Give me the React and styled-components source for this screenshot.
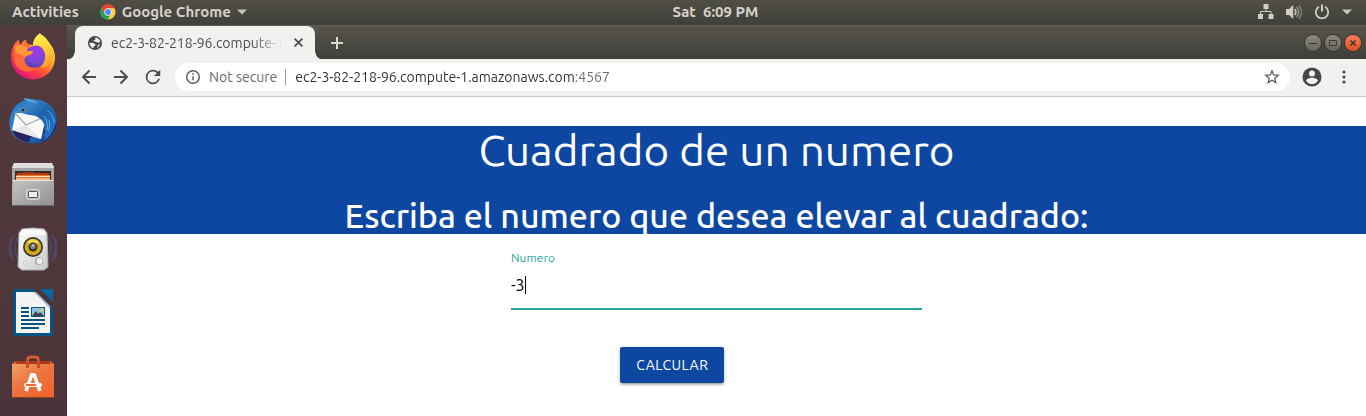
import React, { useState } from "react";
import styled, { createGlobalStyle } from "styled-components";

const GlobalStyle = createGlobalStyle`
  *, *::before, *::after { box-sizing: border-box; }
  html, body, #root { height: 100%; }
  body {
    margin: 0;
    background: #fff;
    font-family: Ubuntu, "Noto Sans", "Open Sans", sans-serif;
  }
  button, input { font: inherit; }
  svg { display: block; flex: none; }
`;

const Desktop = styled.div`
  display: flex;
  flex-direction: column;
  min-height: 100vh;
`;

const TopBar = styled.header`
  display: grid;
  grid-template-columns: 1fr auto 1fr;
  align-items: center;
  height: 25px;
  padding: 0 14px 0 12px;
  background: linear-gradient(#504e47, #403f39);
  color: #d6d2ca;
  font-size: 15px;
  font-weight: 600;
`;

const BarGroup = styled.div`
  display: flex;
  align-items: center;
  justify-content: ${(p) => (p.$end ? "flex-end" : "flex-start")};
  gap: ${(p) => (p.$end ? 12 : 21)}px;
`;

const BarButton = styled.button`
  display: flex;
  align-items: center;
  gap: 6px;
  padding: 0 0 2px;
  border: 0;
  background: none;
  color: inherit;
  line-height: 20px;
  white-space: pre;
`;

const Clock = styled(BarButton)`
  margin-left: 67px;
`;

const Workspace = styled.div`
  display: flex;
  flex: 1;
`;

const Launcher = styled.nav`
  display: flex;
  flex-direction: column;
  align-items: center;
  gap: 16px;
  width: 67px;
  padding: 7px 1px 0 0;
  background: linear-gradient(#523a3d, #4b3439);
`;

const LauncherButton = styled.button`
  display: block;
  width: 48px;
  height: 48px;
  padding: 0;
  border: 0;
  background: none;
`;

const BrowserWindow = styled.div`
  display: flex;
  flex: 1;
  flex-direction: column;
  min-width: 0;
`;

const TabStrip = styled.div`
  display: flex;
  align-items: center;
  height: 34px;
  padding: 0 5px 0 8px;
  border-top: 1px solid #5f5d55;
  background: linear-gradient(#57554d, #3f3e39);
`;

const Tab = styled.div`
  position: relative;
  display: flex;
  align-items: center;
  gap: 9px;
  width: 240px;
  height: 34px;
  padding: 0 10px 0 13px;
  border-radius: 8px 8px 0 0;
  background: #f2f1f0;
  color: #4c4c4c;
  font-size: 14px;

  &::before, &::after {
    content: "";
    position: absolute;
    bottom: 0;
    width: 8px;
    height: 8px;
  }
  &::before {
    right: 100%;
    background: radial-gradient(circle at 0 0, transparent 7px, #f2f1f0 8px);
  }
  &::after {
    left: 100%;
    background: radial-gradient(circle at 100% 0, transparent 7px, #f2f1f0 8px);
  }
`;

const TabTitle = styled.span`
  flex: 1;
  overflow: hidden;
  white-space: nowrap;
  mask-image: linear-gradient(to right, #000 calc(100% - 28px), transparent);
`;

const IconButton = styled.button`
  display: grid;
  place-items: center;
  width: ${(p) => p.$size}px;
  height: ${(p) => p.$size}px;
  flex: none;
  padding: 0;
  border: 0;
  background: none;
  color: ${(p) => p.$color || "#4c4c4c"};
`;

const WindowControls = styled.div`
  display: flex;
  gap: 4px;
  margin-left: auto;
`;

const WindowButton = styled.button`
  display: grid;
  place-items: center;
  width: 16px;
  height: 16px;
  padding: 0;
  border: 0;
  border-radius: 50%;
  box-shadow: 0 0 0 1px #33322d;
  background: ${(p) =>
    p.$close ? "linear-gradient(#f5805a, #e04f1d)" : "linear-gradient(#8b8981, #66645d)"};
  color: #3a3833;
`;

const Toolbar = styled.div`
  display: flex;
  align-items: center;
  gap: 12px;
  height: 38px;
  padding: 0 12px 2px 12px;
  border-bottom: 1px solid #c9c8c7;
  background: #f2f1f0;
`;

const AddressBar = styled.div`
  display: flex;
  flex: 1;
  align-items: center;
  gap: 9px;
  height: 28px;
  padding: 0 10px;
  border-radius: 14px;
  background: #fff;
  color: #6a6a6a;
  font-size: 14px;
`;

const SiteInfo = styled.button`
  display: flex;
  align-items: center;
  gap: 8px;
  padding: 0 8px 0 0;
  border: 0;
  border-right: 1px solid #9b9b9b;
  background: none;
  color: inherit;
  line-height: 16px;
`;

const AddressInput = styled.input`
  flex: 1;
  min-width: 0;
  padding: 0;
  border: 0;
  outline: 0;
  background: linear-gradient(to right, #2e2e2e 279px, #6a6a6a 279px);
  background-clip: text;
  color: transparent;
`;

const Page = styled.main`
  flex: 1;
  padding-top: 29px;
  background: #fff;
`;

const Banner = styled.section`
  display: flex;
  flex-direction: column;
  gap: 22px;
  background: #0d47a1;
  color: #fff;
  text-align: center;
`;

const Title = styled.h1`
  margin: 0;
  font-size: 44px;
  font-weight: 400;
  line-height: 48px;
`;

const Subtitle = styled.h2`
  margin: 0;
  font-size: 34px;
  font-weight: 500;
  line-height: 38px;
`;

const Form = styled.form`
  display: grid;
  grid-template-columns: repeat(12, 1fr);
  row-gap: 37px;
  padding-top: 15px;
`;

const Field = styled.div`
  grid-column: 5 / span 4;
  display: flex;
  flex-direction: column;
  margin: 0 11px;
  border-bottom: 2px solid #26a69a;
`;

const FieldLabel = styled.label`
  color: #26a69a;
  font-size: 12px;
  line-height: 18px;
`;

const FieldLine = styled.div`
  display: flex;
  align-items: center;
  height: 41px;
  padding-bottom: 5px;
`;

const NumberInput = styled.input`
  field-sizing: content;
  min-width: 2px;
  padding: 0;
  border: 0;
  outline: 0;
  background: none;
  caret-color: transparent;
  color: #000;
  font-size: 16px;
`;

const Caret = styled.span`
  width: 1px;
  height: 18px;
  background: #000;
`;

const SubmitCell = styled.div`
  grid-column: 6 / span 4;
  padding: 0 12px;
`;

const SubmitButton = styled.button`
  height: 36px;
  padding: 0 16px;
  border: 0;
  border-radius: 2px;
  background: #0d47a1;
  box-shadow: 0 2px 2px rgba(0, 0, 0, 0.14), 0 3px 1px -2px rgba(0, 0, 0, 0.12),
    0 1px 5px rgba(0, 0, 0, 0.2);
  color: #fff;
  font-size: 14px;
  letter-spacing: 0.5px;
  text-transform: uppercase;
`;

const ChromeIcon = () => (
  <svg width="16" height="16" viewBox="0 0 16 16">
    <circle cx="8" cy="8" r="7.6" fill="#ffcd40" />
    <path d="M1.4 4.2A7.6 7.6 0 0 1 14.6 4.2H8L4.8 9.8Z" fill="#e84435" />
    <path d="M1.4 4.2A7.6 7.6 0 0 0 7.6 15.6L11.2 9.8 8 11.6 4.8 9.8Z" fill="#1da15c" />
    <circle cx="8" cy="8" r="3.7" fill="#f4f4f4" />
    <circle cx="8" cy="8" r="2.9" fill="#4c8bf5" />
  </svg>
);

const DownArrow = () => (
  <svg width="10" height="6" viewBox="0 0 10 6"><path d="M0 .5h10L5 5.5Z" fill="#c9c6be" /></svg>
);

const NetworkIcon = () => (
  <svg width="16" height="16" viewBox="0 0 16 16" fill="#d0cdc5">
    <path d="M5.5 0h5v5h-5zM0 10h5v5H0zM10.500 10h5v5h-5z" />
    <path d="M8 5v2.500M2.500 10V7.500h10.500V10" fill="none" stroke="#d0cdc5" />
  </svg>
);

const VolumeIcon = () => (
  <svg width="16" height="16" viewBox="0 0 16 16" fill="none" strokeLinecap="round">
    <path d="M0 5h3l4.200-4v14L3 11H0Z" fill="#d0cdc5" />
    <path d="M9 5.500q2 2.500 0 5" stroke="#d0cdc5" strokeWidth="1.500" />
    <path d="M11 3.500q3.500 4.500 0 9" stroke="#96938b" strokeWidth="1.500" />
    <path d="M13 1.500q5 6.500 0 13" stroke="#7d7a73" strokeWidth="1.500" />
  </svg>
);

const PowerIcon = () => (
  <svg width="16" height="16" viewBox="0 0 16 16" fill="none" stroke="#d0cdc5" strokeWidth="1.800">
    <path d="M5 2.800a6.200 6.200 0 1 0 6 0" />
    <path d="M8 .5v7" strokeWidth="2" />
  </svg>
);

const GlobeIcon = () => (
  <svg width="14" height="14" viewBox="0 0 14 14">
    <circle cx="7" cy="7" r="7" fill="#464646" />
    <path d="M7 1.500C9.500 1.600 11.500 3 12.300 5.200L11 6.700 8.800 6.200 7.600 5.500H6L5.500 4.500 7.500 3.500ZM1.500 6.800 5.500 7 7.500 8.500 7.200 10H5.800L5.400 12.300C3 11.500 1.500 9.400 1.500 6.800ZM10 8.800l2-.6c-.5 1.600-1.500 2.800-3 3.600Z" fill="#f2f1f0" />
  </svg>
);

const Cross = ({ size, width }) => (
  <svg width={size} height={size} viewBox="0 0 8 8" fill="none" stroke="currentColor" strokeWidth={width}>
    <path d="m.5.500 7 7m0-7-7 7" />
  </svg>
);

const PlusIcon = () => (
  <svg width="12" height="12" viewBox="0 0 12 12" fill="none" stroke="currentColor" strokeWidth="2">
    <path d="M6 0v12M0 6h12" />
  </svg>
);

const ArrowIcon = ({ forward }) => (
  <svg width="16" height="16" viewBox="0 0 16 16" fill="none" stroke="currentColor" strokeWidth="2">
    <path d={forward ? "M1 8h13M7.500 1.500 14 8l-6.500 6.500" : "M15 8H2M8.500 1.500 2 8l6.500 6.500"} />
  </svg>
);

const ReloadIcon = () => (
  <svg width="20" height="20" viewBox="1 1 22 22" fill="currentColor">
    <path d="M17.650 6.350A7.960 7.960 0 0 0 12 4a8 8 0 1 0 7.730 10h-2.080A6 6 0 1 1 12 6c1.660 0 3.140.69 4.220 1.780L13 11h7V4z" />
  </svg>
);

const InfoIcon = () => (
  <svg width="16" height="16" viewBox="0 0 16 16" fill="none" stroke="#5f5f5f" strokeWidth="1.500">
    <circle cx="8" cy="8" r="6.300" />
    <path d="M8 7.200v4M8 4.300v1.500" />
  </svg>
);

const StarIcon = () => (
  <svg width="16" height="16" viewBox="0 0 16 16" fill="none" stroke="#5c5c5c" strokeWidth="1.300">
    <path d="m8 1.800 1.700 4.100 4.500.4-3.400 2.900 1 4.400L8 11.300l-3.800 2.300 1-4.400-3.400-2.900 4.500-.4Z" />
  </svg>
);

const ProfileIcon = () => (
  <svg width="20" height="20" viewBox="0 0 20 20">
    <circle cx="10" cy="10" r="9.500" fill="#464646" />
    <circle cx="10" cy="6.500" r="3" fill="#f2f1f0" />
    <path d="M4 13.800c0-2 4-3 6-3s6 1 6 3a7.200 7.200 0 0 1-12 0Z" fill="#f2f1f0" />
  </svg>
);

const MoreIcon = () => (
  <svg width="4" height="14" viewBox="0 0 4 14" fill="#464646">
    <circle cx="2" cy="2" r="1.600" /><circle cx="2" cy="7" r="1.600" /><circle cx="2" cy="12" r="1.600" />
  </svg>
);

const FirefoxIcon = () => (
  <svg width="48" height="48" viewBox="0 0 48 48">
    <defs>
      <linearGradient id="fxBody" x1=".85" y1=".1" x2=".25" y2=".95">
        <stop offset="0" stopColor="#fff04a" /><stop offset=".35" stopColor="#ffae2b" />
        <stop offset=".65" stopColor="#ff5135" /><stop offset="1" stopColor="#e3127a" />
      </linearGradient>
      <linearGradient id="fxFlame" x1=".4" y1="0" x2=".7" y2="1">
        <stop offset="0" stopColor="#fff44f" /><stop offset=".6" stopColor="#ffc533" />
        <stop offset="1" stopColor="#ff9329" />
      </linearGradient>
      <radialGradient id="fxGlobe" cx=".6" cy=".25" r=".8">
        <stop offset="0" stopColor="#a238ee" /><stop offset=".6" stopColor="#7548d8" />
        <stop offset="1" stopColor="#493c9d" />
      </radialGradient>
    </defs>
    <path d="M7 10c-4 5-5 11-5 16a22 21.500 0 0 0 44 0c0-6-2-10-4-13l-1-1c0-1-6-9-10-10-3 2-7 6-7 11l-7-1c-1-1-1-3-1-4-2 1-3 3-4 5l-3 1Z" fill="url(#fxBody)" />
    <path d="M31 1c-4 3-7 7-7 12 6-1 11 3 12 7 2 6-1 12-5 16 9-1 14-7 14-14 0-3-1-6-3-8l-1 2C40 9 33 6 31 1Z" fill="url(#fxFlame)" />
    <path d="M24 14c4-1 9 0 11 5 3 7 0 13-5 16-6 3-14 0-16-7l1-10Z" fill="url(#fxGlobe)" />
    <path d="M7 12c0-2 1-4 3-5 0 2 0 3 1 5l4 0c0-3 1-4 2-5 0 4 3 6 5 7-3 1-4 3-4 5l6 1c0 2-2 3-6 4-2 1-3 3-2 6 2 5 7 7 12 5-7 9-22 4-23-8 0-6 0-11 2-15Z" fill="#ff6a3a" />
    <path d="M7 14c4-2 9-1 12 2-1 1-1 2-1 3h6c0 3-7 4-8 6-4-3-8-3-10-6Z" fill="#ff9836" />
  </svg>
);

const ThunderbirdIcon = () => (
  <svg width="48" height="48" viewBox="0 0 48 48">
    <defs>
      <linearGradient id="tbBody" x1="0" y1="0" x2="1" y2=".8">
        <stop offset="0" stopColor="#2b78bd" /><stop offset=".5" stopColor="#2a83d2" />
        <stop offset="1" stopColor="#143c8f" />
      </linearGradient>
      <linearGradient id="tbHead" x1="0" y1="0" x2="1" y2="1">
        <stop offset="0" stopColor="#4d9edb" /><stop offset=".5" stopColor="#1e61ad" />
        <stop offset="1" stopColor="#2474c7" />
      </linearGradient>
    </defs>
    <path d="M3 16C0 22-1 31 3 37c4 7 14 11 24 10 13 0 21-10 21-21 0-12-8-20-18-22L15 2c0 1 1 2 3 2C11 5 5 10 3 16Z" fill="url(#tbBody)" />
    <path d="M3 34c2 7 9 12 17 12l2-5 15-5-3 10c8-4 13-11 14-20L24 24Z" fill="#282363" />
    <path d="m7 15 28 2 1 9-4 17L3 34Z" fill="#f8f8f8" />
    <path d="M3 34 17 29l15 14Z" fill="#e7e8ea" />
    <path d="m6 17 11 12 18-8" fill="none" stroke="#a6a8aa" strokeWidth="1.200" />
    <path d="M6 17c3-5 6-6 9-6 5-6 12-8 19-5 8 3 13 12 13 20-1 8-6 15-12 19 2-7 0-11 0-17-2-5-7-9-15-9l-8-2Z" fill="url(#tbHead)" />
    <path d="M38 14c4 3 7 8 7 13M35 20c3 4 4 9 3 14M40 24c1 4 1 8-1 11" fill="none" stroke="#55b5e7" />
    <path d="M15 2c1 4 8 3 14 6-5-6-10-4-14-6Z" fill="#60ace2" />
    <circle cx="14" cy="14" r="1.800" fill="#1d263b" stroke="#9e986d" strokeWidth=".6" />
  </svg>
);

const FilesIcon = () => (
  <svg width="48" height="48" viewBox="0 0 48 48">
    <defs>
      <linearGradient id="flFront" x1="0" y1="0" x2="1" y2="1">
        <stop offset="0" stopColor="#c5c5c5" /><stop offset="1" stopColor="#909090" />
      </linearGradient>
    </defs>
    <path d="M5 3h38l2 4v39H3V7Z" fill="#a4a4a4" />
    <path d="M5 3h38l2 5H3Z" fill="#dedede" />
    <path d="M6 11h36v11H6Z" fill="#342b29" />
    <path d="M8 13l16-1 2 1h14v8H8Z" fill="#b43c18" />
    <path d="M7 15h34v6H7Z" fill="#e87325" />
    <path d="M7 16.500h34" stroke="#ffe5c5" />
    <path d="M7 18h34v4H7Z" fill="#f5eee7" />
    <path d="M7 19h34" stroke="#ed7d32" />
    <path d="M4 20h40l1 25H3Z" fill="url(#flFront)" />
    <path d="M4 20.500h40" stroke="#e9e9e9" />
    <rect x="17.500" y="29.500" width="13" height="10" rx="2" fill="#b4b4b4" stroke="#d8d8d8" />
    <rect x="19.500" y="31.500" width="9" height="6" rx="1" fill="#eee" stroke="#555" />
    <path d="M3 45.500h42" stroke="#666" />
  </svg>
);

const MusicIcon = () => (
  <svg width="48" height="48" viewBox="0 0 48 48">
    <defs>
      <linearGradient id="spBox" x1="0" y1="0" x2="1" y2="1">
        <stop offset="0" stopColor="#fff" /><stop offset="1" stopColor="#c6c8c7" />
      </linearGradient>
    </defs>
    <path d="M9 13q-6 11 0 22M5 11q-7 13 0 26M2 14q-4 10 0 20M39 13q6 11 0 22M43 11q7 13 0 26M46 14q4 10 0 20" fill="none" stroke="#4b5b92" strokeWidth="1.500" opacity=".5" />
    <path d="M13 5q11-2 22 0l3 4 1 34-4 3H13l-4-3 1-34Z" fill="url(#spBox)" stroke="#acacac" />
    <path d="M13 7q11-2 22 0l2 4H11Z" fill="#fafafa" />
    <circle cx="24" cy="23" r="10" fill="#383631" />
    <circle cx="24" cy="23" r="8.300" fill="#d6ac16" />
    <path d="M18 18a8 8 0 0 1 12 0l-4 3h-4Z" fill="#f4da4b" />
    <circle cx="24" cy="23" r="4.500" fill="#35332f" />
    <circle cx="24" cy="22.500" r="2.800" fill="#7e8181" />
    <circle cx="24" cy="21.500" r="1" fill="#ddd" />
    <circle cx="30" cy="37" r="4" fill="#a6a8a7" /><circle cx="30.500" cy="37" r="3" fill="#efefed" />
    <circle cx="16.500" cy="39" r="2" fill="#e6e7e6" stroke="#ccc" />
  </svg>
);

const WriterIcon = () => (
  <svg width="48" height="48" viewBox="0 0 48 48">
    <path d="M6 1h18l20 19v26q0 2-2 2H6q-2 0-2-2V3q0-2 2-2Z" fill="#075582" />
    <path d="M31 1h11q2 0 2 2v11Z" fill="#0568a0" />
    <path d="M7 4h18l16 16v25H7Z" fill="#f4f4f4" />
    <path d="M25 4h2l14 14v3Z" fill="#b8c2c8" />
    <path d="M12 20h8M12 24h8M12 28h8M12 32h24M12 36h24M12 40h18" stroke="#0c557e" strokeWidth="2" />
    <path d="M22 19h14v10H22Z" fill="#0a5b88" />
    <path d="M23 20h12v8H23Z" fill="#8cc4df" />
    <circle cx="33" cy="22" r="1.500" fill="#efcf38" />
    <path d="m23 28 4-5 2 3 2-2 4 4Z" fill="#41443d" />
  </svg>
);

const StoreIcon = () => (
  <svg width="48" height="48" viewBox="0 0 48 48">
    <defs>
      <linearGradient id="stBag" x1="0" y1="0" x2=".8" y2="1">
        <stop offset="0" stopColor="#f0a064" /><stop offset=".5" stopColor="#ec7440" />
        <stop offset="1" stopColor="#f0642a" />
      </linearGradient>
    </defs>
    <path d="m3 12 3-3h36l3 3Z" fill="#a83c19" />
    <path d="M3 12h42v33.500H3Z" fill="url(#stBag)" />
    <path d="m3 12 3-3 2 3Zm42 0-3-3-2 3Z" fill="#dc5c2b" />
    <path d="M18.500 16V8q0-3 3-3h5q3 0 3 3v8" fill="none" stroke="#cf4b22" strokeWidth="3" />
    <path d="M19 8q0-3 3-3h4q3 0 3 3" fill="none" stroke="#ed7445" />
    <path d="m17 39 6-17m8 17-6-17M22 22.800h4" fill="none" stroke="#fff" strokeWidth="3.600" />
    <rect x="15" y="31" width="18" height="4" rx="2" fill="#fff" />
    <rect x="16.500" y="32" width="11" height="2" rx="1" fill="#ed6b31" />
    <path d="M3 45.500h42" stroke="#8e3b20" />
  </svg>
);

const launcherApps = [
  ["Firefox", FirefoxIcon],
  ["Thunderbird", ThunderbirdIcon],
  ["Files", FilesIcon],
  ["Rhythmbox", MusicIcon],
  ["LibreOffice Writer", WriterIcon],
  ["Ubuntu Software", StoreIcon],
];

export default function App() {
  const [number, setNumber] = useState("-3");
  const [address, setAddress] = useState("ec2-3-82-218-96.compute-1.amazonaws.com:4567");

  return (
    <Desktop>
      <GlobalStyle />
      <TopBar>
        <BarGroup>
          <BarButton>Activities</BarButton>
          <BarButton><ChromeIcon />Google Chrome<DownArrow /></BarButton>
        </BarGroup>
        <Clock>{"Sat  6:09 PM"}</Clock>
        <BarGroup $end>
          <BarButton aria-label="Network"><NetworkIcon /></BarButton>
          <BarButton aria-label="Volume"><VolumeIcon /></BarButton>
          <BarButton aria-label="Power"><PowerIcon /></BarButton>
          <BarButton aria-label="System menu"><DownArrow /></BarButton>
        </BarGroup>
      </TopBar>
      <Workspace>
        <Launcher aria-label="Launcher">
          {launcherApps.map(([name, Icon]) => (
            <LauncherButton key={name} aria-label={name}><Icon /></LauncherButton>
          ))}
        </Launcher>
        <BrowserWindow>
          <TabStrip>
            <Tab>
              <GlobeIcon />
              <TabTitle>ec2-3-82-218-96.compute-1</TabTitle>
              <IconButton $size={14} aria-label="Close tab"><Cross size={9} width={1.5} /></IconButton>
            </Tab>
            <IconButton $size={44} $color="#dfdbd2" aria-label="New tab"><PlusIcon /></IconButton>
            <WindowControls>
              <WindowButton aria-label="Minimize">
                <svg width="8" height="8" viewBox="0 0 8 8"><path d="M0 4.500h8" stroke="currentColor" /></svg>
              </WindowButton>
              <WindowButton aria-label="Maximize">
                <svg width="8" height="8" viewBox="0 0 8 8"><path d="M.5 1.500h7v5h-7z" fill="none" stroke="currentColor" /></svg>
              </WindowButton>
              <WindowButton $close aria-label="Close"><Cross size={6} width={2} /></WindowButton>
            </WindowControls>
          </TabStrip>
          <Toolbar>
            <IconButton $size={20} aria-label="Back"><ArrowIcon /></IconButton>
            <IconButton $size={20} aria-label="Forward"><ArrowIcon forward /></IconButton>
            <IconButton $size={20} aria-label="Reload"><ReloadIcon /></IconButton>
            <AddressBar>
              <SiteInfo><InfoIcon />Not secure</SiteInfo>
              <AddressInput
                aria-label="Address"
                value={address}
                onChange={(e) => setAddress(e.target.value)}
              />
              <IconButton $size={16} aria-label="Bookmark"><StarIcon /></IconButton>
            </AddressBar>
            <IconButton $size={20} aria-label="Profile"><ProfileIcon /></IconButton>
            <IconButton $size={20} aria-label="Menu"><MoreIcon /></IconButton>
          </Toolbar>
          <Page>
            <Banner>
              <Title>Cuadrado de un numero</Title>
              <Subtitle>Escriba el numero que desea elevar al cuadrado:</Subtitle>
            </Banner>
            <Form onSubmit={(e) => e.preventDefault()}>
              <Field>
                <FieldLabel htmlFor="number">Numero</FieldLabel>
                <FieldLine>
                  <NumberInput id="number" value={number} onChange={(e) => setNumber(e.target.value)} />
                  <Caret />
                </FieldLine>
              </Field>
              <SubmitCell>
                <SubmitButton type="submit">Calcular</SubmitButton>
              </SubmitCell>
            </Form>
          </Page>
        </BrowserWindow>
      </Workspace>
    </Desktop>
  );
}
